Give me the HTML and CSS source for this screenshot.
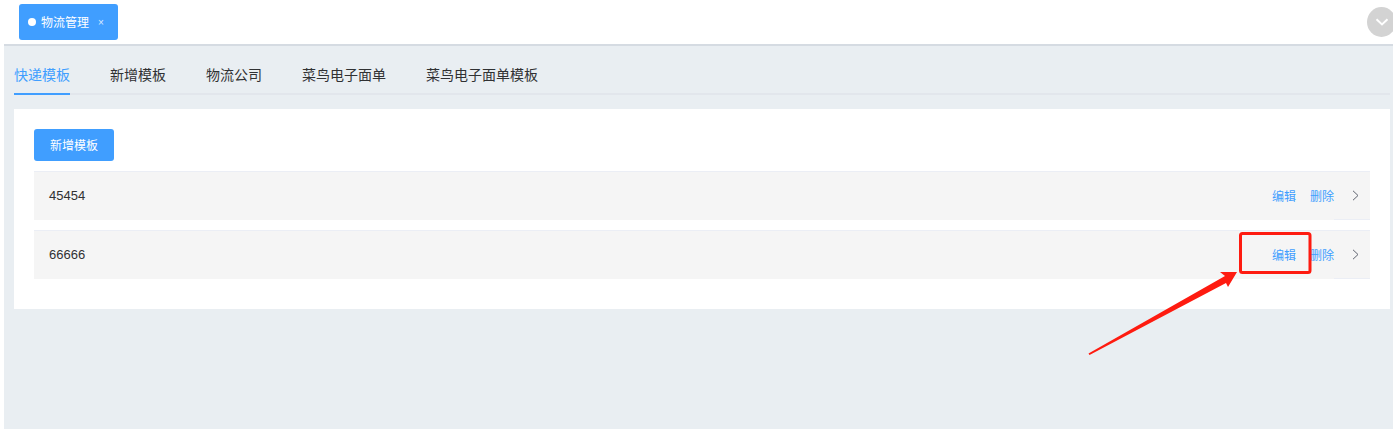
FILE: index.html
```html
<!DOCTYPE html>
<html lang="en">
	<head>
		<meta http-equiv="Content-Type" content="text/html;charset=utf-8" />
		<title>物流管理</title>
		<link rel="stylesheet" href="styles.css">
	</head>
	<body>
		<div id="page">
			<div class="topbar">
				<div class="pagetab">
					<span class="dot"></span>
					<span class="pagetab-name">物流管理</span>
					<span class="pagetab-close">×</span>
				</div>
				<div class="more">
					<svg width="14" height="8" viewBox="0 0 14 8"><path d="M1.5 1.2 L7 6.4 L12.5 1.2" fill="none" stroke="#fff" stroke-width="2"/></svg>
				</div>
			</div>
			<div class="main">
				<div class="tabs">
					<div class="tab active">快递模板</div>
					<div class="tab">新增模板</div>
					<div class="tab">物流公司</div>
					<div class="tab">菜鸟电子面单</div>
					<div class="tab">菜鸟电子面单模板</div>
				</div>
				<div class="card">
					<button class="addbtn">新增模板</button>
					<div class="row">
						<div class="row-head">
							<span class="row-name">45454</span>
							<a class="link edit">编辑</a>
							<a class="link">删除</a>
						</div>
						<div class="row-arrow">
							<svg width="7" height="11" viewBox="0 0 7 11"><path d="M1 .8 L6 5.5 L1 10.2" fill="none" stroke="#5f6470" stroke-width="1"/></svg>
						</div>
					</div>
					<div class="row">
						<div class="row-head">
							<span class="row-name">66666</span>
							<a class="link edit">编辑</a>
							<a class="link">删除</a>
						</div>
						<div class="row-arrow">
							<svg width="7" height="11" viewBox="0 0 7 11"><path d="M1 .8 L6 5.5 L1 10.2" fill="none" stroke="#5f6470" stroke-width="1"/></svg>
						</div>
					</div>
				</div>
			</div>
		</div>
		<!-- annotation drawn over the screenshot -->
		<svg class="annotation" width="1393" height="429" viewBox="0 0 1393 429">
			<rect x="1240.5" y="233.5" width="69.5" height="39" rx="2" fill="none" stroke="#fe1b10" stroke-width="3"/>
			<path d="M1088.5 353.5 L1225 276 L1220 272 L1237 272 L1228 287 L1226 283 L1089.5 355 Z" fill="#fe1b10"/>
		</svg>
	</body>
</html>
```

FILE: styles.css
```css
html, body {
	margin: 0;
	padding: 0;
	height: 100%;
	overflow: hidden;
	background-color: #fff;
	font-family: "Liberation Sans", "Noto Sans CJK SC", sans-serif;
}

#page {
	height: 429px;
	display: flex;
	flex-direction: column;
}

.topbar {
	height: 44px;
	flex: none;
	box-sizing: border-box;
	padding: 4px 0 0 19px;
	display: flex;
	justify-content: space-between;
	align-items: flex-start;
	overflow: hidden;
}
.pagetab {
	width: 99px;
	height: 36px;
	box-sizing: border-box;
	padding-left: 9px;
	display: flex;
	align-items: center;
	background-color: #409eff;
	border-radius: 3px;
	color: #fff;
	font-size: 12px;
}
.dot {
	width: 8px;
	height: 8px;
	margin-right: 5px;
	background-color: #fff;
	border-radius: 50%;
}
.pagetab-name {
	padding-bottom: 2px;
}
.pagetab-close {
	margin-left: 9px;
	font-size: 10px;
	opacity: .8;
}
.more {
	width: 29px;
	height: 30px;
	margin: 3px -3px 0 0;
	flex: none;
	display: flex;
	align-items: center;
	justify-content: center;
	background-color: #d3d3d3;
	border-radius: 50%;
}

.main {
	flex: 1;
	margin-left: 4px;
	padding: 0 3px 0 10px;
	background-color: #e9eef2;
	border-top: 2px solid #d5dbe2;
}

.tabs {
	height: 49px;
	box-sizing: border-box;
	padding-top: 13px;
	display: flex;
	gap: 40px;
	border-bottom: 2px solid #e2e6ec;
}
.tab {
	height: 36px;
	box-sizing: border-box;
	margin-bottom: -2px;
	line-height: 32px;
	font-size: 14px;
	color: #303133;
}
.tab.active {
	color: #409eff;
	border-bottom: 2px solid #409eff;
}

.card {
	height: 200px;
	box-sizing: border-box;
	margin-top: 14px;
	padding: 20px;
	background-color: #fff;
}
.addbtn {
	display: block;
	width: 80px;
	height: 32px;
	padding: 0 0 2px;
	margin-bottom: 10px;
	border: 0;
	border-radius: 3px;
	background-color: #409eff;
	color: #fff;
	font-family: inherit;
	font-size: 12px;
}

.row {
	height: 49px;
	box-sizing: border-box;
	margin-bottom: 10px;
	display: flex;
	background-color: #f5f5f5;
	border-top: 1px solid #ebeef5;
}
.row-head {
	flex: 1;
	height: 46px;
	padding-left: 15px;
	display: flex;
	align-items: center;
	font-size: 12px;
}
.row-name {
	flex: 1;
	font-size: 13px;
	color: #303133;
}
.link {
	margin-left: 14px;
	color: #409eff;
	font-size: 12px;
}
.row-arrow {
	width: 36px;
	height: 48px;
	box-sizing: border-box;
	padding: 0 11px 0 0;
	display: flex;
	align-items: center;
	justify-content: flex-end;
	border-bottom: 1px solid #ebeef5;
}

.annotation {
	position: absolute;
	left: 0;
	top: 0;
	pointer-events: none;
}
```
